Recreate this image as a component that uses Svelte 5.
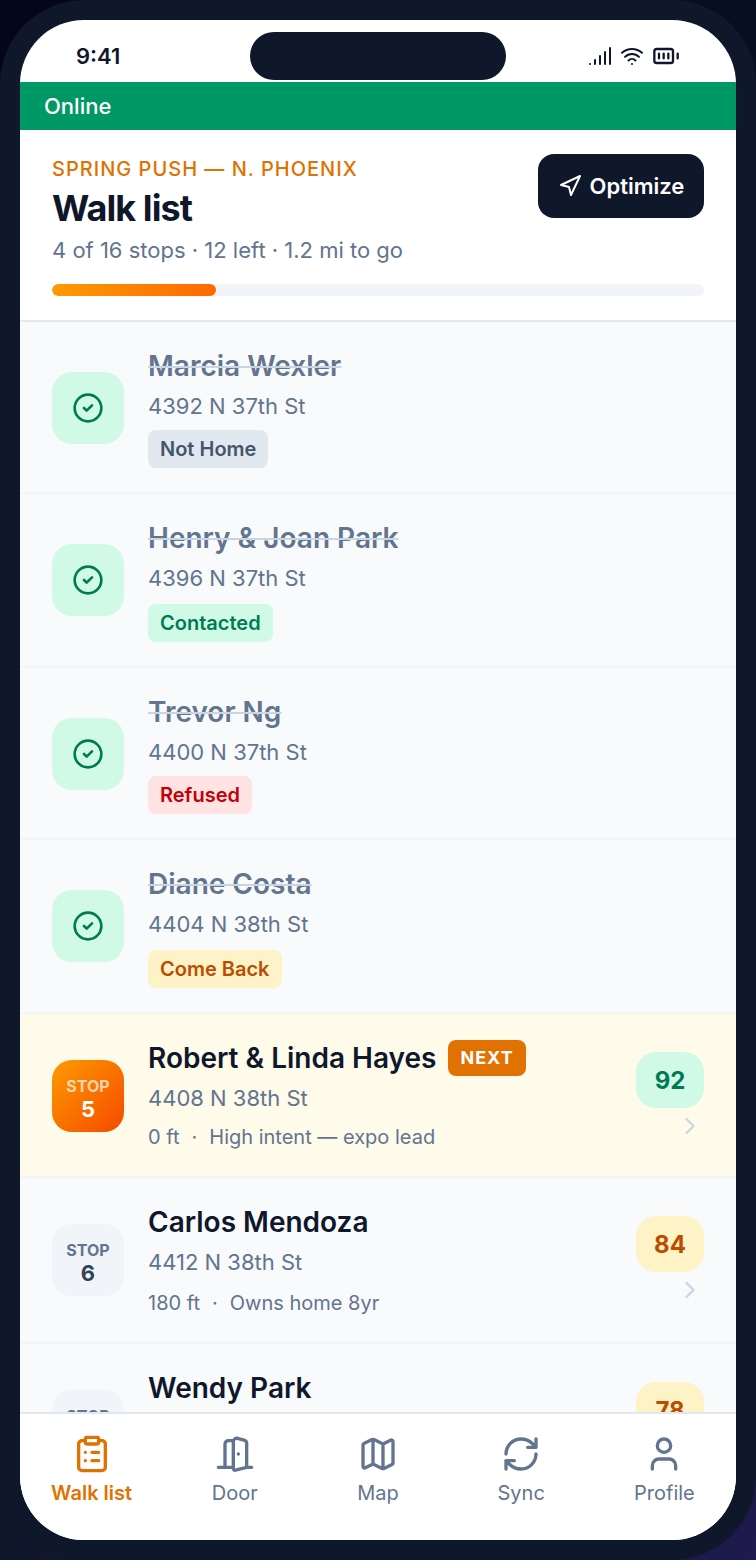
<script>
  const done = [
    { name: 'Marcia Wexler', addr: '4392 N 37th St', status: 'Not Home', cls: 'gray' },
    { name: 'Henry & Joan Park', addr: '4396 N 37th St', status: 'Contacted', cls: 'green' },
    { name: 'Trevor Ng', addr: '4400 N 37th St', status: 'Refused', cls: 'red' },
    { name: 'Diane Costa', addr: '4404 N 38th St', status: 'Come Back', cls: 'amber' }
  ];
  const todo = [
    { stop: 5, name: 'Robert & Linda Hayes', addr: '4408 N 38th St', dist: '0 ft', note: 'High intent — expo lead', score: 92, cls: 'green', next: true },
    { stop: 6, name: 'Carlos Mendoza', addr: '4412 N 38th St', dist: '180 ft', note: 'Owns home 8yr', score: 84, cls: 'amber' },
    { stop: 7, name: 'Wendy Park', addr: '4416 N 38th St', dist: '340 ft', note: 'Renter', score: 78, cls: 'amber' }
  ];
</script>

<div class="frame">
  <div class="screen">
    <div class="status">
      <span class="time">9:41</span>
      <div class="island"></div>
      <div class="sys">
        <svg width="24" height="24" viewBox="0 0 24 24"><path d="M2 20h.01M7 20v-4M12 20v-8M17 20V8M22 4v16" /></svg>
        <svg width="24" height="24" viewBox="0 0 24 24"><path d="M12 20h.01M2 8.82a15 15 0 0 1 20 0M5 12.859a10 10 0 0 1 14 0M8.5 16.429a5 5 0 0 1 7 0" /></svg>
        <svg width="28" height="28" viewBox="0 0 24 24"><path d="M10 10v4M14 10v4M22 14v-4M6 10v4" /><rect x="2" y="6" width="16" height="12" rx="2" /></svg>
      </div>
    </div>
    <div class="online">Online</div>

    <header class="head">
      <div class="head-top">
        <div>
          <div class="eyebrow">SPRING PUSH — N. PHOENIX</div>
          <h1>Walk list</h1>
          <div class="sub">4 of 16 stops · 12 left · 1.2 mi to go</div>
        </div>
        <button class="opt">
          <svg width="24" height="24" viewBox="0 0 24 24"><polygon points="3 11 22 2 13 21 11 13 3 11" /></svg>
          Optimize
        </button>
      </div>
      <div class="track"><div class="fill"></div></div>
    </header>

    <div class="list">
      {#each done as d}
        <div class="row">
          <div class="tile check">
            <svg width="32" height="32" viewBox="0 0 24 24"><circle cx="12" cy="12" r="10" /><path d="m9 12 2 2 4-4" /></svg>
          </div>
          <div class="body">
            <div class="name struck"><span>{d.name}</span></div>
            <div class="addr">{d.addr}</div>
            <span class="pill {d.cls}">{d.status}</span>
          </div>
        </div>
      {/each}
      {#each todo as t}
        <div class="row" class:active={t.next}>
          <div class="tile stop" class:hot={t.next}>
            <span class="lbl">STOP</span>
            <span class="num">{t.stop}</span>
          </div>
          <div class="body">
            <div class="name">
              <span>{t.name}</span>
              {#if t.next}<span class="next">NEXT</span>{/if}
            </div>
            <div class="addr">{t.addr}</div>
            <div class="meta"><span>{t.dist}</span><span>·</span><span>{t.note}</span></div>
          </div>
          <div class="side">
            <div class="score {t.cls}">{t.score}</div>
            <svg class="chev" width="28" height="28" viewBox="0 0 24 24"><path d="m9 18 6-6-6-6" /></svg>
          </div>
        </div>
      {/each}
    </div>

    <nav class="nav">
      <div class="tab on">
        <svg width="40" height="40" viewBox="0 0 24 24"><rect x="8" y="2" width="8" height="4" rx="1" /><path d="M16 4h2a2 2 0 0 1 2 2v14a2 2 0 0 1-2 2H6a2 2 0 0 1-2-2V6a2 2 0 0 1 2-2h2M12 11h4M12 16h4M8 11h.01M8 16h.01" /></svg>
        <span>Walk list</span>
      </div>
      <div class="tab">
        <svg width="40" height="40" viewBox="0 0 24 24"><path d="M11 20H2M11 4.562v16.157a1 1 0 0 0 1.242.97L19 20V5.562a2 2 0 0 0-1.515-1.94l-4-1A2 2 0 0 0 11 4.561zM11 4H8a2 2 0 0 0-2 2v14M14 12h.01M22 20h-3" /></svg>
        <span>Door</span>
      </div>
      <div class="tab">
        <svg width="40" height="40" viewBox="0 0 24 24"><path d="M14.106 5.553a2 2 0 0 0 1.788 0l3.659-1.83A1 1 0 0 1 21 4.619v12.764a1 1 0 0 1-.553.894l-4.553 2.277a2 2 0 0 1-1.788 0l-4.212-2.106a2 2 0 0 0-1.788 0l-3.659 1.83A1 1 0 0 1 3 19.381V6.618a1 1 0 0 1 .553-.894l4.553-2.277a2 2 0 0 1 1.788 0zM15 5.764v15M9 3.236v15" /></svg>
        <span>Map</span>
      </div>
      <div class="tab">
        <svg width="40" height="40" viewBox="0 0 24 24"><path d="M3 12a9 9 0 0 1 9-9 9.75 9.75 0 0 1 6.74 2.74L21 8M21 3v5h-5M21 12a9 9 0 0 1-9 9 9.75 9.75 0 0 1-6.74-2.74L3 16M8 16H3v5" /></svg>
        <span>Sync</span>
      </div>
      <div class="tab">
        <svg width="40" height="40" viewBox="0 0 24 24"><path d="M19 21v-2a4 4 0 0 0-4-4H9a4 4 0 0 0-4 4v2" /><circle cx="12" cy="7" r="4" /></svg>
        <span>Profile</span>
      </div>
    </nav>
  </div>
</div>

<style>
  :global(body) {
    margin: 0;
    background: linear-gradient(135deg, #020618 0%, #0f172b 67%, #1e1a4d 100%);
    font-family: Inter, "Liberation Sans", sans-serif;
  }
  svg { fill: none; stroke: currentColor; stroke-width: 2; stroke-linecap: round; stroke-linejoin: round; display: block; flex: none; }
  .frame {
    box-sizing: border-box; width: 756px; height: 1560px; padding: 20px;
    background: #0f172b; border-radius: 84px;
  }
  .screen {
    height: 100%; background: #fff; border-radius: 64px; overflow: hidden;
    display: flex; flex-direction: column; position: relative;
  }
  .status {
    height: 62px; flex: none; display: flex; align-items: center; justify-content: space-between;
    padding: 10px 56px 0; box-sizing: border-box; color: #0f172b;
  }
  .time { font-size: 22px; font-weight: 600; line-height: 30px; }
  .island {
    position: absolute; left: 230px; top: 12px; width: 256px; height: 48px;
    background: #0f172b; border-radius: 24px;
  }
  .sys { display: flex; align-items: center; gap: 8px; }
  .online {
    height: 48px; flex: none; background: #009966; color: #fff;
    font-size: 22px; font-weight: 500; line-height: 48px; padding-left: 24px;
  }
  .head {
    flex: none; box-sizing: border-box; height: 192px; padding: 24px 32px 0;
    border-bottom: 2px solid #e2e8f0; background: #fff;
  }
  .head-top { display: flex; justify-content: space-between; align-items: flex-start; }
  .eyebrow { font-size: 20px; font-weight: 500; line-height: 30px; letter-spacing: 1px; color: #e17100; }
  h1 { margin: 1px 0 0; font-size: 36px; font-weight: 700; line-height: 46px; letter-spacing: -0.9px; color: #0f172b; }
  .sub { margin-top: 3px; font-size: 22px; line-height: 32px; color: #62748e; }
  .opt {
    display: flex; align-items: center; justify-content: center; gap: 8px; width: 166px; height: 64px; padding: 0;
    background: #0f172b; color: #fff; border: 0; border-radius: 16px;
    font: 600 22px Inter, sans-serif;
  }
  .track { height: 12px; margin-top: 18px; background: #f1f5f9; border-radius: 6px; overflow: hidden; }
  .fill { width: 25.15%; height: 100%; border-radius: 6px; background: linear-gradient(90deg, #fe9a00, #ff6900); }

  .list { flex: 1; min-height: 0; overflow: hidden; background: #f8fafc; }
  .row {
    display: flex; align-items: flex-start; gap: 24px; padding: 24px 32px;
    border-bottom: 2px solid #f1f5f9; box-sizing: border-box; background: #f8fafc;
  }
  .row.active { background: #fffbeb; }
  .tile {
    width: 72px; height: 72px; flex: none; border-radius: 20px; box-sizing: border-box;
    display: flex; flex-direction: column; align-items: center; justify-content: center;
  }
  .check { margin-top: 26px; background: #d0fae5; color: #007a55; }
  .stop { margin-top: 22px; background: #f1f5f9; color: #314158; padding-top: 4px; }
  .hot { background: linear-gradient(135deg, #fe9a00, #f54a00); color: #fff; }
  .lbl { font-size: 16px; font-weight: 700; line-height: 22px; color: #62748e; }
  .hot .lbl { color: rgba(255,255,255,.7); }
  .num { font-size: 22px; font-weight: 700; line-height: 24px; }
  .body { flex: 1; min-width: 0; }
  .name {
    display: flex; align-items: center; gap: 12px;
    font-size: 28px; font-weight: 600; line-height: 40px; color: #0f172b;
  }
  .struck { color: #62748e; text-decoration: line-through; text-decoration-color: #cad5e2; }
  .struck span { text-decoration: inherit; }
  .addr { margin-top: 4px; font-size: 22px; line-height: 33px; color: #62748e; }
  .pill {
    display: block; width: fit-content; margin-top: 7px; padding: 0 12px;
    font-size: 20px; font-weight: 600; line-height: 38px; border-radius: 8px;
  }
  .gray { background: #e2e8f0; color: #45556c; }
  .green { background: #d0fae5; color: #007a55; }
  .red { background: #ffe2e2; color: #c10007; }
  .amber { background: #fef3c6; color: #bb4d00; }
  .next {
    background: #e17100; color: #fff; border-radius: 8px; padding: 0 12px;
    font-size: 18px; font-weight: 700; line-height: 36px; letter-spacing: 1px;
  }
  .meta {
    display: flex; gap: 12px; margin-top: 7px; font-size: 20px; line-height: 30px; color: #62748e;
  }
  .row:nth-child(even) .pill, .row:nth-child(even) .meta { margin-top: 9px; }
  .side { display: flex; flex-direction: column; align-items: flex-end; gap: 4px; flex: none; margin-top: 14px; }
  .score {
    width: 68px; height: 56px; border-radius: 20px; font-size: 24px; font-weight: 700;
    display: flex; align-items: center; justify-content: center;
  }
  .chev { color: #cad5e2; }

  .nav {
    flex: none; box-sizing: border-box; height: 128px; border-top: 2px solid #e2e8f0; background: #fff;
    display: grid; grid-template-columns: repeat(5, 1fr); padding-top: 20px; color: #62748e;
  }
  .tab { display: flex; flex-direction: column; align-items: center; gap: 5px; font-size: 20px; font-weight: 400; line-height: 28px; }
  .tab.on { color: #e17100; font-weight: 600; }
</style>
